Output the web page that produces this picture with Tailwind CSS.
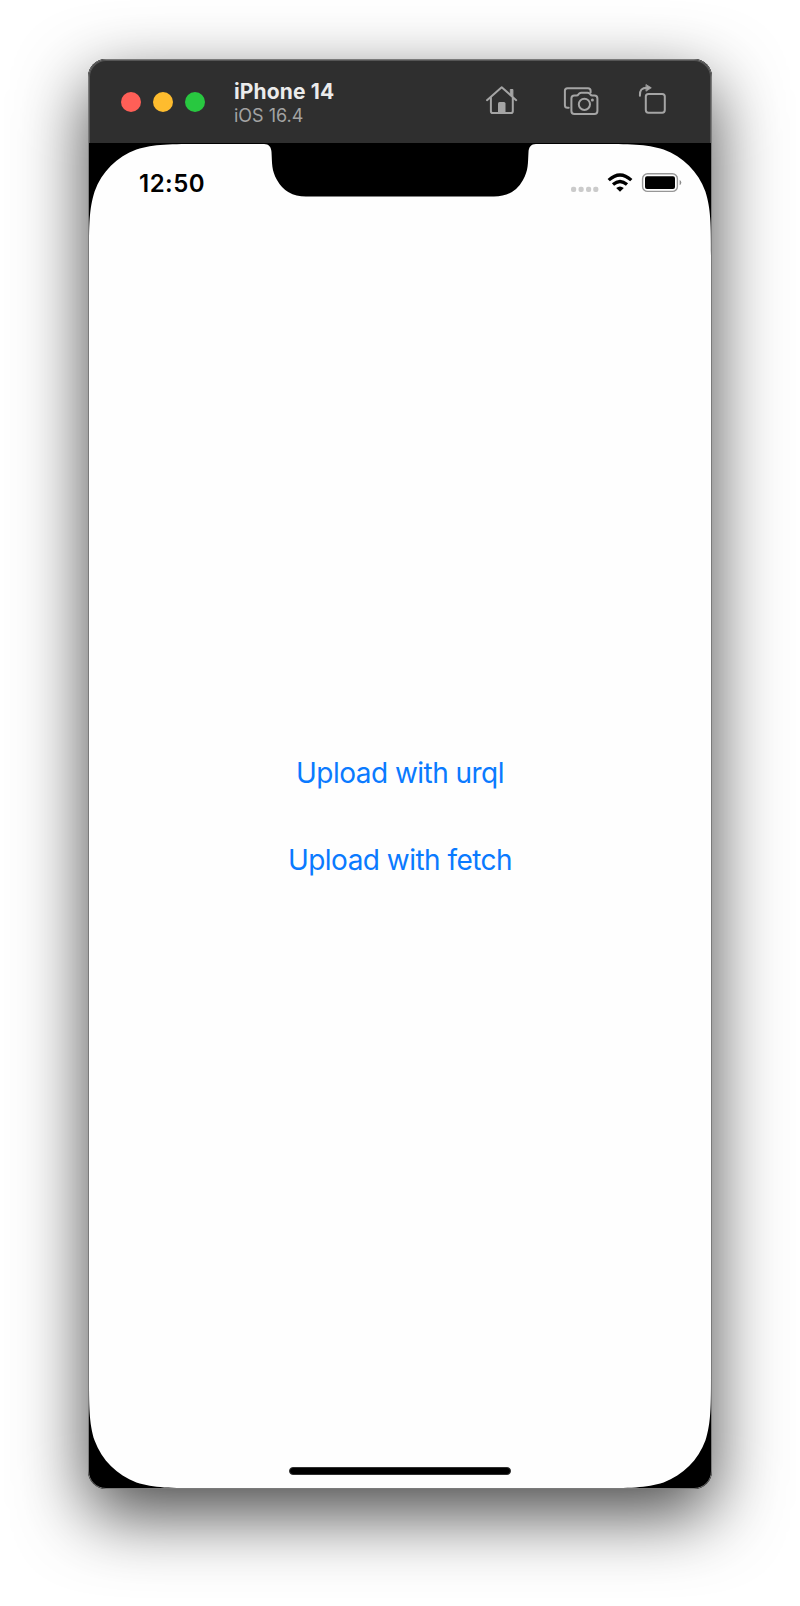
<!DOCTYPE html>
<html lang="en">
<head>
<meta charset="utf-8">
<title>iPhone 14</title>
<script src="https://cdn.jsdelivr.net/npm/@tailwindcss/browser@4"></script>
</head>
<body class="bg-white font-['Inter','Liberation_Sans',sans-serif]">
<div class="w-[800px] h-[1606px] overflow-hidden flex flex-col items-center pt-[59px]">
  <div class="relative flex flex-col w-[624px] h-[1430px] rounded-[18px] bg-black overflow-visible shadow-[0_25px_70px_rgba(0,0,0,0.72)]">
    <header class="flex items-center w-full h-[84px] shrink-0 bg-[#2f2f2f] rounded-t-[18px] pl-[33px] pr-[42px]">
      <div class="flex gap-[12px] mt-[1px]">
        <span class="size-[20px] rounded-full bg-[#ff5f57]"></span>
        <span class="size-[20px] rounded-full bg-[#febc2e]"></span>
        <span class="size-[20px] rounded-full bg-[#28c840]"></span>
      </div>
      <div class="flex flex-col ml-[29px] mt-[4px] whitespace-nowrap">
        <span class="text-[21px] leading-[24px] font-bold tracking-[0.15px] text-[#ebebeb]">iPhone 14</span>
        <span class="text-[18px] leading-[23px] text-[#a3a3a3]">iOS 16.4</span>
      </div>
      <svg class="ml-auto -mt-[2px] shrink-0" width="190" height="40" viewBox="480 80 190 40" fill="none" stroke="#a5a5a5" stroke-width="2" stroke-linecap="round" stroke-linejoin="round">
        <path d="M487 100.2 L501.7 87.2 L516.2 100.2 M490.9 97.2 V111.3 Q490.9 113.1 492.7 113.1 H511 Q512.8 113.1 512.8 111.3 V97.2"/>
        <path d="M510.7 89.5 H512.9 V97 L510.7 95 Z" fill="#a5a5a5" stroke-width="1"/>
        <path d="M498 113 V103.5 Q498 102 499.5 102 H504 Q505.5 102 505.5 103.5 V113 Z" fill="#a5a5a5" stroke="none"/>
        <path d="M568.7 107.8 H567.5 Q564.9 107.8 564.9 105.2 V90.8 Q564.9 88.2 567.5 88.2 H588 Q590.6 88.2 590.6 90.8 V92.5"/>
        <path d="M574.4 95.4 H576.5 Q577.7 95.4 578.5 94.3 L579.3 93.4 Q580.1 92.7 581.3 92.7 H587.5 Q588.7 92.7 589.5 93.4 L590.3 94.3 Q591.1 95.4 592.3 95.4 H594.4 Q597.4 95.4 597.4 98.4 V111 Q597.4 114 594.4 114 H574.4 Q571.4 114 571.4 111 V98.4 Q571.4 95.4 574.4 95.4 Z"/>
        <circle cx="584.4" cy="104.3" r="5.6"/>
        <circle cx="592.4" cy="99.9" r="1.5" fill="#a5a5a5" stroke="none"/>
        <rect x="645.8" y="93.9" width="19" height="18.8" rx="2.6"/>
        <path d="M639.9 95.7 Q639.3 87.7 647 87.7"/>
        <path d="M646.3 84.7 L651.3 87.8 L646.3 91 Z" fill="#a5a5a5" stroke-width="0.8"/>
      </svg>
    </header>
    <main class="relative flex flex-col items-center w-full flex-1">
      <svg class="absolute inset-0" width="624" height="1346" viewBox="88 143 624 1346">
        <path fill="#fefefe" d="M89 258.6 C89 225.6 89 209.1 94.6 191.4 C101.7 172 117 156.7 136.4 149.6 C154.1 144 170.6 144 203.6 144 H264 C269 144 271.2 147 271.5 152 C272.2 164 271.5 170 277 180 Q286 196.5 306 196.5 H494 Q514 196.5 523 180 C528.5 170 527.8 164 528.5 152 C528.8 147 531 144 536 144 H596.4 C629.4 144 645.9 144 663.6 149.6 C683 156.7 698.3 172 705.4 191.4 C711 209.1 711 225.6 711 258.6 V1373.4 C711 1406.4 711 1422.9 705.4 1440.6 C698.3 1460 683 1475.3 663.6 1482.4 C645.9 1488 629.4 1488 596.4 1488 H203.6 C170.6 1488 154.1 1488 136.4 1482.4 C117 1475.3 101.7 1460 94.6 1440.6 C89 1422.9 89 1406.4 89 1373.4 Z"/>
      </svg>
      <div class="relative flex items-start justify-between w-full h-[54px] pl-[51px] pr-[29px]">
        <span class="mt-[25px] text-[24px] leading-[32px] font-semibold tracking-[0.5px] text-black whitespace-nowrap">12:50</span>
        <svg class="mt-[25px]" width="114" height="28" viewBox="569 168 114 28" fill="none">
          <g fill="#cbcbcb">
            <rect x="571" y="186.7" width="5.2" height="5.2" rx="2"/>
            <rect x="578.5" y="186.7" width="5.2" height="5.2" rx="2"/>
            <rect x="586" y="186.7" width="5.2" height="5.2" rx="2"/>
            <rect x="593.2" y="186.7" width="5.2" height="5.2" rx="2"/>
          </g>
          <path d="M608.7 180.1 Q620 169.7 631.3 180.1 M613 184.6 Q620 178.5 627 184.6" stroke="#000" stroke-width="3.3"/>
          <path d="M616.2 188 Q620 185 623.8 188 L620 191.8 Z" fill="#000"/>
          <rect x="642.6" y="173.8" width="34.8" height="17.6" rx="5" stroke="#979797" stroke-width="1.4"/>
          <rect x="645" y="176.2" width="30" height="12.8" rx="2" fill="#000"/>
          <path d="M679.6 180 Q681.3 180.8 681.3 182.6 Q681.3 184.5 679.6 185.3 Z" fill="#8c8c8c"/>
        </svg>
      </div>
      <div class="relative flex flex-col items-center gap-[51px] mt-[558px] text-[28px] leading-[36px] text-[#0a7aff] whitespace-nowrap">
        <span class="tracking-[-0.53px]">Upload with urql</span>
        <span class="tracking-[-0.53px]">Upload with fetch</span>
      </div>
      <div class="relative mt-auto mb-[14px] w-[222px] h-[8px] rounded-full bg-black border border-[#303030]"></div>
    </main>
    <div class="absolute inset-0 rounded-[18px] border border-[#7a7a7a] pointer-events-none"></div>
    <div class="absolute inset-x-[1px] top-[1px] h-[83px] rounded-t-[17px] border-t border-x border-[#565656] pointer-events-none"></div>
  </div>
</div>
</body>
</html>
